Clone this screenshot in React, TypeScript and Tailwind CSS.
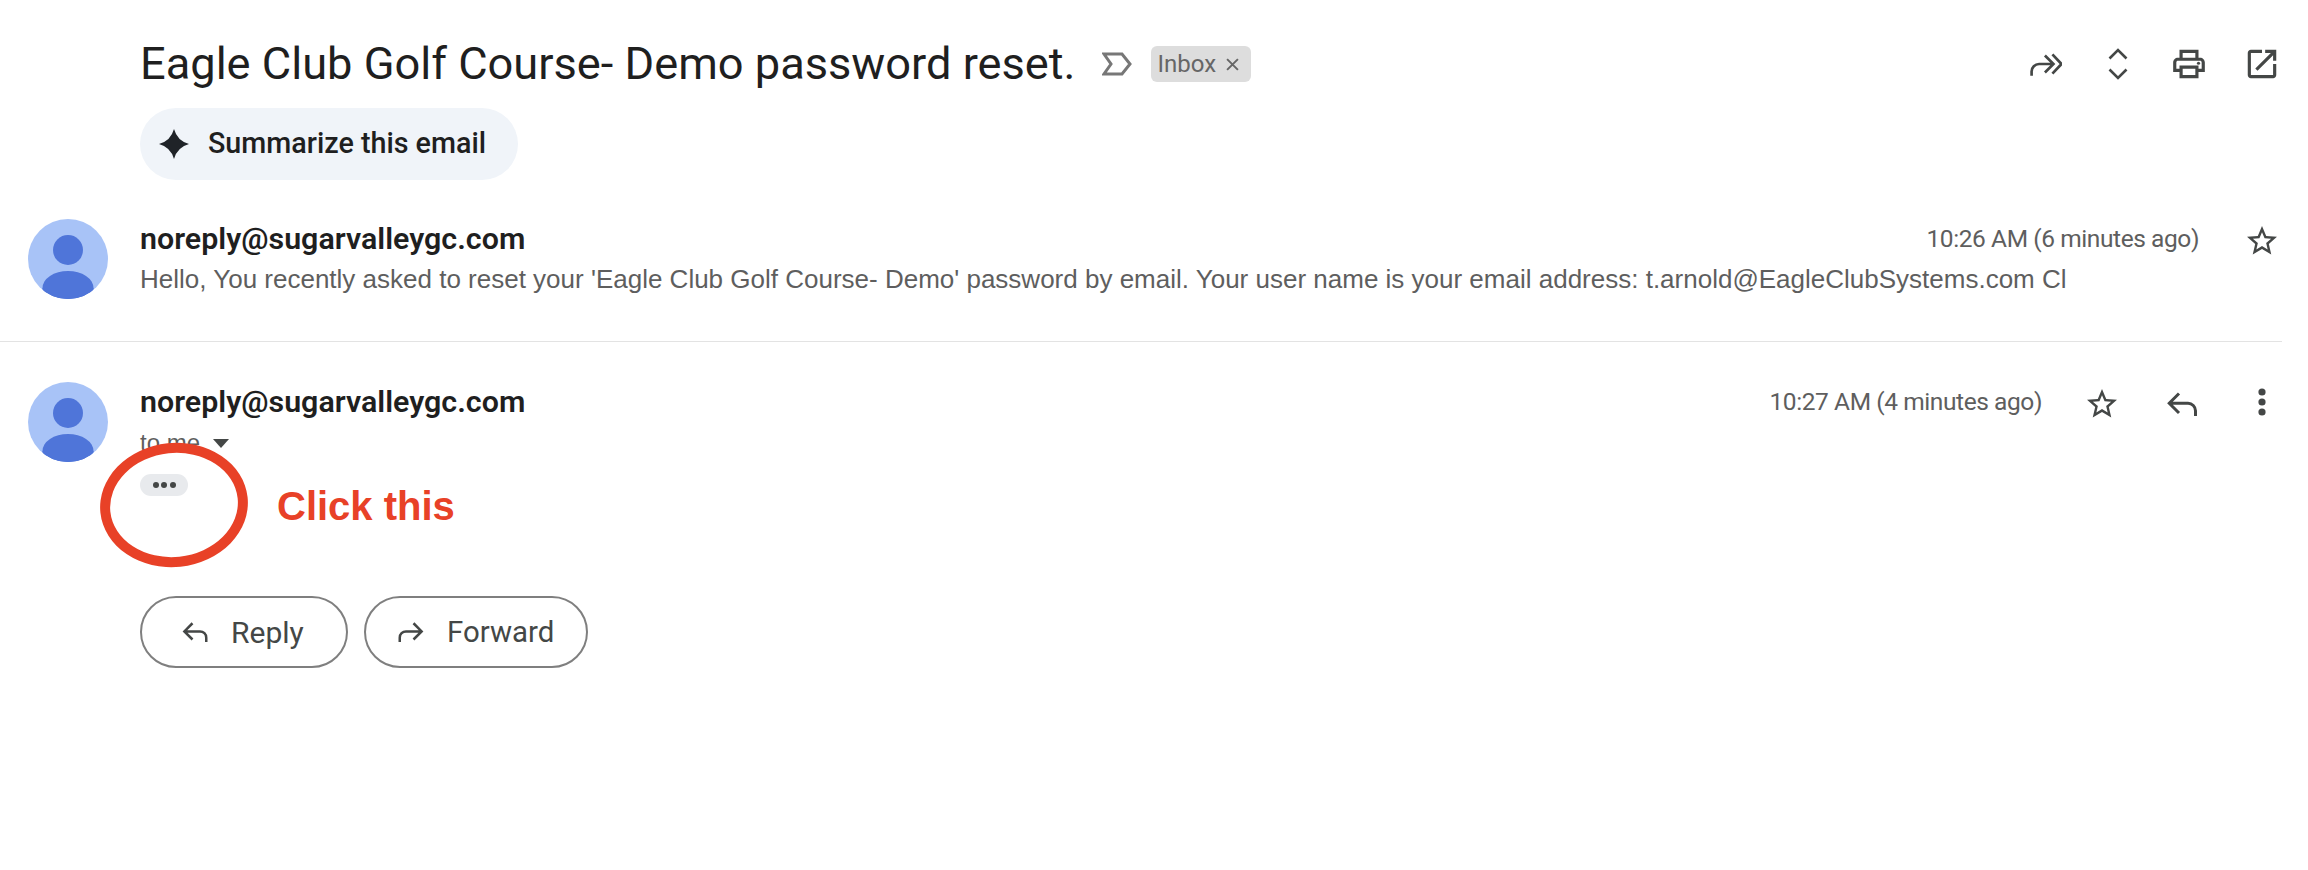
import React from "react";

const G = "font-['Roboto',sans-serif]";
const A = "font-['Liberation_Sans',Arial,sans-serif]";

const Star = ({ className = "" }: { className?: string }) => (
  <svg viewBox="0 0 24 24" className={className} fill="#444746">
    <path d="M22 9.24l-7.19-.62L12 2 9.19 8.63 2 9.24l5.46 4.73L5.82 21 12 17.27 18.18 21l-1.63-7.03L22 9.24zM12 15.4l-3.76 2.27 1-4.28-3.32-2.88 4.38-.38L12 6.1l1.71 4.04 4.38.38-3.32 2.88 1 4.28L12 15.4z" />
  </svg>
);

const ReplyIcon = ({ className = "" }: { className?: string }) => (
  <svg viewBox="0 0 24 24" className={className} fill="none" stroke="#444746" strokeWidth="2">
    <path d="M10 5L3.5 11.5 10 18M3.5 11.5H16a5 5 0 0 1 5 5V20" />
  </svg>
);

const ForwardIcon = ({ className = "" }: { className?: string }) => (
  <svg viewBox="0 0 24 24" className={className} fill="none" stroke="#444746" strokeWidth="2">
    <path d="M14 5l6.5 6.5L14 18M20.5 11.5H8a5 5 0 0 0-5 5V20" />
  </svg>
);

const Avatar = () => (
  <svg viewBox="0 0 80 80" className="w-[80px] h-[80px] shrink-0">
    <defs>
      <clipPath id="avatar-clip">
        <circle cx="40" cy="40" r="40" />
      </clipPath>
    </defs>
    <circle cx="40" cy="40" r="40" fill="#a8c3f7" />
    <g clipPath="url(#avatar-clip)" fill="#4f75d9">
      <circle cx="40" cy="31" r="15" />
      <ellipse cx="40" cy="69" rx="25.5" ry="17" />
      <rect x="14.5" y="69" width="51" height="12" />
    </g>
  </svg>
);

function Sender() {
  return <div className={`${G} text-[30.4px] leading-[36px] font-semibold text-[#1f1f1f]`}>noreply@sugarvalleygc.com</div>;
}

export default function App() {
  return (
    <div className="relative w-[2308px] h-[870px] bg-white overflow-hidden">
      {/* subject */}
      <div className="flex items-center h-[64px] mt-[32px] pl-[140px] pr-[27px]">
        <h1 className={`${G} text-[45.2px] leading-[64px] font-normal text-[#1f1f1f]`}>Eagle Club Golf Course- Demo password reset.</h1>
        <svg viewBox="0 0 30 24" className="w-[30px] h-[24px] ml-[26px]" fill="none" stroke="#777" strokeWidth="3">
          <path d="M2 2h18l8 10-8 10H2l7-10z" />
        </svg>
        <div className={`${G} ml-[19px] h-[36px] w-[100px] rounded-[6px] bg-[#dddddd] flex items-center pl-[7px] gap-[10px] text-[24px] text-[#666666]`}>
          <span>Inbox</span>
          <svg viewBox="0 0 12 12" className="w-[13px] h-[13px]" fill="none" stroke="#666" strokeWidth="1.8">
            <path d="M1 1l10 10M11 1L1 11" />
          </svg>
        </div>
        <div className="ml-auto flex items-center">
          <svg viewBox="0 0 30 24" className="w-[32px] h-[26px]" fill="none" stroke="#444746" strokeWidth="2.5">
            <path d="M1.5 23v-4a7 7 0 0 1 7-7H21M14 4l8 8-8 8M21 3l8.5 9-8.5 9" />
          </svg>
          <svg viewBox="0 0 20 32" className="w-[20px] h-[32px] ml-[46px]" fill="none" stroke="#444746" strokeWidth="2.6">
            <path d="M1.5 10.5L10 2l8.5 8.5M1.5 21.5L10 30l8.5-8.5" />
          </svg>
          <svg viewBox="0 0 24 24" className="w-[38px] h-[38px] ml-[42px]" fill="#444746">
            <path d="M19 8h-1V3H6v5H5c-1.66 0-3 1.34-3 3v6h4v4h12v-4h4v-6c0-1.66-1.34-3-3-3zM8 5h8v3H8V5zm8 12v2H8v-4h8v2zm2-2v-2H6v2H4v-4c0-.55.45-1 1-1h14c.55 0 1 .45 1 1v4h-2z" />
            <circle cx="18" cy="11.5" r="1" />
          </svg>
          <svg viewBox="0 0 24 24" className="w-[38px] h-[38px] ml-[35px]" fill="#444746">
            <path d="M19 19H5V5h7V3H5c-1.11 0-2 .9-2 2v14c0 1.1.89 2 2 2h14c1.1 0 2-.9 2-2v-7h-2v7zM14 3v2h3.59l-9.83 9.83 1.41 1.41L19 6.41V10h2V3h-7z" />
          </svg>
        </div>
      </div>

      {/* summarize */}
      <div className="pl-[140px] mt-[12px]">
        <div className={`${G} inline-flex items-center h-[72px] w-[378px] rounded-[36px] bg-[#f0f4f9] pl-[19px] gap-[19px] text-[28.7px] font-medium text-[#1f1f1f]`}>
          <svg viewBox="0 0 28 28" className="w-[30px] h-[30px]" fill="#1f2328">
            <path d="M14 0Q17 11 28 14 17 17 14 28 11 17 0 14 11 11 14 0z" />
          </svg>
          <span>Summarize this email</span>
        </div>
      </div>

      {/* collapsed message */}
      <div className="flex mt-[39px] pl-[28px] pr-[28px] h-[122px]">
        <Avatar />
        <div className="ml-[32px] flex-1 min-w-0 pt-[2px]">
          <div className="flex items-start">
            <Sender />
            <div className={`${G} ml-auto text-[24.5px] tracking-[-0.42px] leading-[36px] text-[#5e5e5e]`}>10:26 AM (6 minutes ago)</div>
            <Star className="w-[36px] h-[36px] ml-[45px] mt-[2px]" />
          </div>
          <div className={`${A} text-[26px] leading-[36px] mt-[2px] text-[#5e5e5e] whitespace-nowrap`}>
            Hello, You recently asked to reset your 'Eagle Club Golf Course- Demo' password by email. Your user name is your email address: t.arnold@EagleClubSystems.com Cl
          </div>
        </div>
      </div>

      <div className="h-px w-[2282px] bg-[#e3e3e3]" />

      {/* expanded message */}
      <div className="flex mt-[40px] pl-[28px] pr-[26px]">
        <Avatar />
        <div className="ml-[32px] flex-1 min-w-0 pt-[2px]">
          <div className="flex items-start">
            <Sender />
            <div className={`${G} ml-auto text-[24.5px] tracking-[-0.42px] leading-[36px] text-[#5e5e5e]`}>10:27 AM (4 minutes ago)</div>
            <Star className="w-[36px] h-[36px] ml-[42px] mt-[2px]" />
            <ReplyIcon className="w-[36px] h-[36px] ml-[44px] mt-[2px]" />
            <svg viewBox="0 0 8 32" className="w-[8px] h-[32px] ml-[58px] mr-[16px] mt-[2px]" fill="#444746">
              <circle cx="4" cy="6" r="3.6" />
              <circle cx="4" cy="16" r="3.6" />
              <circle cx="4" cy="26" r="3.6" />
            </svg>
          </div>
          <div className={`${A} flex items-center h-[30px] mt-[6px] text-[24px] leading-[30px] text-[#5e5e5e]`}>
            to me
            <svg viewBox="0 0 16 9" className="w-[16px] h-[9px] ml-[13px]" fill="#444746">
              <path d="M0 0h16L8 9z" />
            </svg>
          </div>
          <div className="mt-[16px] w-[48px] h-[22px] rounded-[11px] bg-[#e8eaed] flex items-center justify-center gap-[2.5px]">
            <span className="w-[6px] h-[6px] rounded-full bg-[#444746]" />
            <span className="w-[6px] h-[6px] rounded-full bg-[#444746]" />
            <span className="w-[6px] h-[6px] rounded-full bg-[#444746]" />
          </div>
          <div className="flex gap-[16px] mt-[100px]">
            <div className={`${G} flex items-center w-[208px] h-[72px] rounded-[36px] border-2 border-[#7f7f7f] pl-[38px] gap-[21px] text-[30px] text-[#444746]`}>
              <ReplyIcon className="w-[30px] h-[30px]" />
              <span>Reply</span>
            </div>
            <div className={`${G} flex items-center w-[224px] h-[72px] rounded-[36px] border-2 border-[#7f7f7f] pl-[30px] gap-[21px] text-[29.4px] text-[#444746]`}>
              <ForwardIcon className="w-[30px] h-[30px]" />
              <span>Forward</span>
            </div>
          </div>
        </div>
      </div>

      {/* annotation */}
      <div className="absolute left-[100px] top-[443px] w-[148px] h-[124px] rounded-[50%] border-[10px] border-[#e84127] rotate-[-6deg]" />
      <div className={`${A} absolute left-[277px] top-[482px] text-[40px] leading-[48px] font-bold text-[#e84127]`}>Click this</div>
    </div>
  );
}
